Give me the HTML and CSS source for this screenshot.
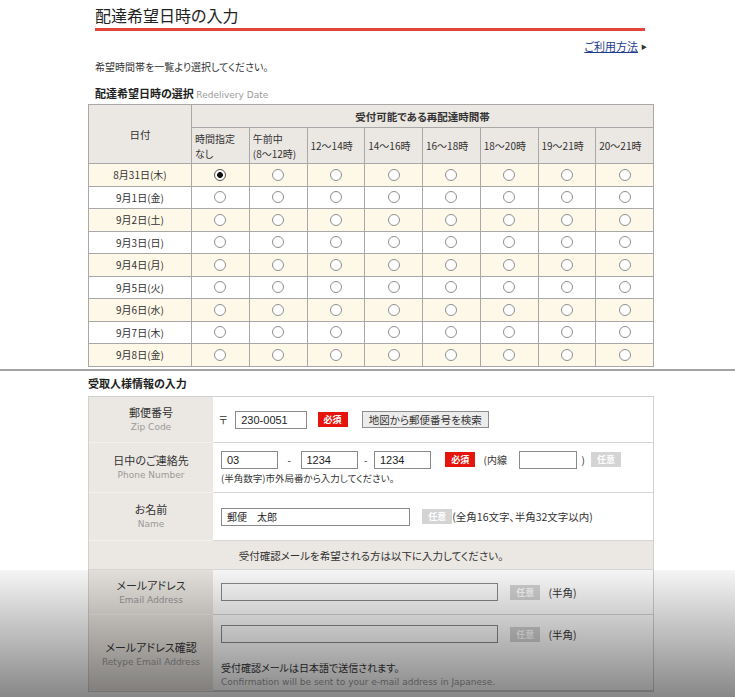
FILE: index.html
```html
<!DOCTYPE html>
<html lang="ja">

<head>
  <meta charset="UTF-8" />
  <meta name="viewport" content="width=device-width, initial-scale=1.0" />
  <title>配達希望日時の入力</title>
  <link rel="stylesheet" href="styles.css">
</head>

<body>
  <!-- 配達希望日時 -->
  <div class="panel panel-top">
    <div class="wrap">
      <h1 class="page-title">配達希望日時の入力</h1>
      <div class="guide"><a href="#">ご利用方法</a><span class="tri">▶</span></div>
      <p class="lead">希望時間帯を一覧より選択してください。</p>
      <h2 class="sub-title">配達希望日時の選択 <span class="en">Redelivery Date</span></h2>

      <table class="date-table">
        <colgroup>
          <col class="col-date">
          <col span="8">
        </colgroup>
        <thead>
          <tr class="head-main">
            <th rowspan="2" class="th-date">日付</th>
            <th colspan="8" class="th-span">受付可能である再配達時間帯</th>
          </tr>
          <tr class="head-sub">
            <th>時間指定<br>なし</th>
            <th>午前中<br>(8〜12時)</th>
            <th>12〜14時</th>
            <th>14〜16時</th>
            <th>16〜18時</th>
            <th>18〜20時</th>
            <th>19〜21時</th>
            <th>20〜21時</th>
          </tr>
        </thead>
        <tbody>
          <tr>
            <td>8月31日(木)</td>
            <td><input class="slot" type="radio" name="slot" value="0831-0" checked></td>
            <td><input class="slot" type="radio" name="slot" value="0831-1"></td>
            <td><input class="slot" type="radio" name="slot" value="0831-2"></td>
            <td><input class="slot" type="radio" name="slot" value="0831-3"></td>
            <td><input class="slot" type="radio" name="slot" value="0831-4"></td>
            <td><input class="slot" type="radio" name="slot" value="0831-5"></td>
            <td><input class="slot" type="radio" name="slot" value="0831-6"></td>
            <td><input class="slot" type="radio" name="slot" value="0831-7"></td>
          </tr>
          <tr>
            <td>9月1日(金)</td>
            <td><input class="slot" type="radio" name="slot" value="0901-0"></td>
            <td><input class="slot" type="radio" name="slot" value="0901-1"></td>
            <td><input class="slot" type="radio" name="slot" value="0901-2"></td>
            <td><input class="slot" type="radio" name="slot" value="0901-3"></td>
            <td><input class="slot" type="radio" name="slot" value="0901-4"></td>
            <td><input class="slot" type="radio" name="slot" value="0901-5"></td>
            <td><input class="slot" type="radio" name="slot" value="0901-6"></td>
            <td><input class="slot" type="radio" name="slot" value="0901-7"></td>
          </tr>
          <tr>
            <td>9月2日(土)</td>
            <td><input class="slot" type="radio" name="slot" value="0902-0"></td>
            <td><input class="slot" type="radio" name="slot" value="0902-1"></td>
            <td><input class="slot" type="radio" name="slot" value="0902-2"></td>
            <td><input class="slot" type="radio" name="slot" value="0902-3"></td>
            <td><input class="slot" type="radio" name="slot" value="0902-4"></td>
            <td><input class="slot" type="radio" name="slot" value="0902-5"></td>
            <td><input class="slot" type="radio" name="slot" value="0902-6"></td>
            <td><input class="slot" type="radio" name="slot" value="0902-7"></td>
          </tr>
          <tr>
            <td>9月3日(日)</td>
            <td><input class="slot" type="radio" name="slot" value="0903-0"></td>
            <td><input class="slot" type="radio" name="slot" value="0903-1"></td>
            <td><input class="slot" type="radio" name="slot" value="0903-2"></td>
            <td><input class="slot" type="radio" name="slot" value="0903-3"></td>
            <td><input class="slot" type="radio" name="slot" value="0903-4"></td>
            <td><input class="slot" type="radio" name="slot" value="0903-5"></td>
            <td><input class="slot" type="radio" name="slot" value="0903-6"></td>
            <td><input class="slot" type="radio" name="slot" value="0903-7"></td>
          </tr>
          <tr>
            <td>9月4日(月)</td>
            <td><input class="slot" type="radio" name="slot" value="0904-0"></td>
            <td><input class="slot" type="radio" name="slot" value="0904-1"></td>
            <td><input class="slot" type="radio" name="slot" value="0904-2"></td>
            <td><input class="slot" type="radio" name="slot" value="0904-3"></td>
            <td><input class="slot" type="radio" name="slot" value="0904-4"></td>
            <td><input class="slot" type="radio" name="slot" value="0904-5"></td>
            <td><input class="slot" type="radio" name="slot" value="0904-6"></td>
            <td><input class="slot" type="radio" name="slot" value="0904-7"></td>
          </tr>
          <tr>
            <td>9月5日(火)</td>
            <td><input class="slot" type="radio" name="slot" value="0905-0"></td>
            <td><input class="slot" type="radio" name="slot" value="0905-1"></td>
            <td><input class="slot" type="radio" name="slot" value="0905-2"></td>
            <td><input class="slot" type="radio" name="slot" value="0905-3"></td>
            <td><input class="slot" type="radio" name="slot" value="0905-4"></td>
            <td><input class="slot" type="radio" name="slot" value="0905-5"></td>
            <td><input class="slot" type="radio" name="slot" value="0905-6"></td>
            <td><input class="slot" type="radio" name="slot" value="0905-7"></td>
          </tr>
          <tr>
            <td>9月6日(水)</td>
            <td><input class="slot" type="radio" name="slot" value="0906-0"></td>
            <td><input class="slot" type="radio" name="slot" value="0906-1"></td>
            <td><input class="slot" type="radio" name="slot" value="0906-2"></td>
            <td><input class="slot" type="radio" name="slot" value="0906-3"></td>
            <td><input class="slot" type="radio" name="slot" value="0906-4"></td>
            <td><input class="slot" type="radio" name="slot" value="0906-5"></td>
            <td><input class="slot" type="radio" name="slot" value="0906-6"></td>
            <td><input class="slot" type="radio" name="slot" value="0906-7"></td>
          </tr>
          <tr>
            <td>9月7日(木)</td>
            <td><input class="slot" type="radio" name="slot" value="0907-0"></td>
            <td><input class="slot" type="radio" name="slot" value="0907-1"></td>
            <td><input class="slot" type="radio" name="slot" value="0907-2"></td>
            <td><input class="slot" type="radio" name="slot" value="0907-3"></td>
            <td><input class="slot" type="radio" name="slot" value="0907-4"></td>
            <td><input class="slot" type="radio" name="slot" value="0907-5"></td>
            <td><input class="slot" type="radio" name="slot" value="0907-6"></td>
            <td><input class="slot" type="radio" name="slot" value="0907-7"></td>
          </tr>
          <tr>
            <td>9月8日(金)</td>
            <td><input class="slot" type="radio" name="slot" value="0908-0"></td>
            <td><input class="slot" type="radio" name="slot" value="0908-1"></td>
            <td><input class="slot" type="radio" name="slot" value="0908-2"></td>
            <td><input class="slot" type="radio" name="slot" value="0908-3"></td>
            <td><input class="slot" type="radio" name="slot" value="0908-4"></td>
            <td><input class="slot" type="radio" name="slot" value="0908-5"></td>
            <td><input class="slot" type="radio" name="slot" value="0908-6"></td>
            <td><input class="slot" type="radio" name="slot" value="0908-7"></td>
          </tr>
        </tbody>
      </table>
    </div>
  </div>

  <!-- 受取人様情報 -->
  <div class="panel panel-bottom">
    <div class="wrap">
      <h2 class="sub-title sub-title-flush">受取人様情報の入力</h2>

      <table class="form-table">
        <tr class="row-zip">
          <th>
            <span class="label-ja">郵便番号</span>
            <span class="label-en">Zip Code</span>
          </th>
          <td>
            <span class="zip-mark">〒</span>
            <input class="field field-zip" type="text" value="230-0051">
            <span class="badge badge-req">必須</span>
            <button class="btn-search" type="button">地図から郵便番号を検索</button>
          </td>
        </tr>
        <tr class="row-tel">
          <th>
            <span class="label-ja">日中のご連絡先</span>
            <span class="label-en">Phone Number</span>
          </th>
          <td>
            <div class="tel-line">
              <input class="field field-tel" type="text" value="03">
              <span class="dash dash-wide">-</span>
              <input class="field field-tel" type="text" value="1234">
              <span class="dash">-</span>
              <input class="field field-tel" type="text" value="1234">
              <span class="badge badge-req badge-gap">必須</span>
              <span class="ext">(内線</span>
              <input class="field field-ext" type="text">
              <span class="ext-close">)</span>
              <span class="badge badge-opt">任意</span>
            </div>
            <p class="note">(半角数字)市外局番から入力してください。</p>
          </td>
        </tr>
        <tr class="row-name">
          <th>
            <span class="label-ja">お名前</span>
            <span class="label-en">Name</span>
          </th>
          <td>
            <input class="field field-name" type="text" value="郵便　太郎">
            <span class="badge badge-opt badge-gap-s">任意</span><span class="hint">(全角16文字、半角32文字以内)</span>
          </td>
        </tr>
        <tr class="row-msg">
          <td colspan="2">受付確認メールを希望される方は以下に入力してください。</td>
        </tr>
        <tr class="row-mail">
          <th>
            <span class="label-ja">メールアドレス</span>
            <span class="label-en">Email Address</span>
          </th>
          <td>
            <input class="field field-mail" type="text">
            <span class="badge badge-opt badge-gap-s">任意</span>
            <span class="hint hint-mail">(半角)</span>
          </td>
        </tr>
        <tr class="row-retype">
          <th>
            <span class="label-ja">メールアドレス確認</span>
            <span class="label-en">Retype Email Address</span>
          </th>
          <td>
            <input class="field field-mail" type="text">
            <span class="badge badge-opt badge-gap-s">任意</span>
            <span class="hint hint-mail">(半角)</span>
            <p class="mail-note">受付確認メールは日本語で送信されます。</p>
            <p class="mail-note-en">Confirmation will be sent to your e-mail address in Japanese.</p>
          </td>
        </tr>
      </table>
    </div>
  </div>

  <div class="fade"></div>
</body>

</html>
```

FILE: styles.css
```css
html,
body {
  margin: 0;
  padding: 0;
  height: 697px;
  overflow: hidden;
  background: #fff;
}

body {
  position: relative;
  font-family: "Noto Sans CJK JP", sans-serif;
  font-feature-settings: "palt";
  font-size: 10px;
  color: #333;
}

.panel-top {
  height: 369px;
  box-sizing: border-box;
  padding-top: 5px;
}

.panel-bottom {
  border-top: 2px solid #a2a2a2;
}

.wrap {
  width: 566px;
  margin-left: 88px;
}

/* heading block */
.page-title {
  margin: 0 9px 0 7px;
  padding-bottom: 3px;
  font-size: 16px;
  line-height: 20px;
  font-weight: normal;
  color: #222;
  border-bottom: 3px solid #e2453a;
}

.guide {
  margin: 8px 7px 0 0;
  text-align: right;
  font-size: 11px;
  line-height: 14px;
}

.guide a {
  color: #1d3c8c;
  text-decoration: underline;
}

.guide .tri {
  display: inline-block;
  margin-left: 3px;
  font-size: 6px;
  color: #333;
  vertical-align: 2px;
}

.lead {
  margin: 6px 0 0 7px;
  font-size: 10px;
  line-height: 14px;
}

.sub-title {
  margin: 12px 0 4px 7px;
  font-size: 11px;
  line-height: 14px;
  font-weight: bold;
  color: #222;
}

.sub-title .en {
  font-family: "DejaVu Sans", sans-serif;
  font-size: 9px;
  line-height: 10px;
  font-weight: normal;
  color: #9a9a9a;
}

.sub-title-flush {
  margin: 5px 0 6px 0;
}

/* date / time slot table */
.date-table {
  width: 566px;
  border-collapse: collapse;
  table-layout: fixed;
}

.date-table th,
.date-table td {
  border: 1px solid #a8a8a8;
  padding: 0;
}

.date-table .col-date {
  width: 103px;
}

.date-table thead th {
  background: #ebe7e2;
  font-weight: normal;
}

.head-main {
  height: 23px;
}

.th-date {
  font-size: 10.5px;
}

.th-span {
  font-weight: bold !important;
  font-size: 10.5px;
}

.head-sub {
  height: 36px;
}

.head-sub th {
  text-align: left;
  padding-left: 3px !important;
  line-height: 15px;
  font-size: 10px;
}

.date-table tbody tr {
  height: 22.5px;
}

.date-table tbody td {
  text-align: center;
  font-size: 10px;
  background: #fff;
}

.date-table tbody tr:nth-child(odd) td {
  background: #fdf8e7;
}

.slot {
  appearance: none;
  display: block;
  width: 12px;
  height: 12px;
  margin: 0 auto;
  border: 1px solid #8f8f8f;
  border-radius: 50%;
  background: #fff;
}

.slot:checked {
  border-color: #555;
  background: radial-gradient(circle, #111 0 2.6px, #fff 3.2px);
}

/* recipient form */
.form-table {
  width: 566px;
  border: 1px solid #d0d0d0;
  border-spacing: 0;
}

.form-table th {
  width: 124px;
  padding: 0;
  background: #ebe7e2;
  font-weight: normal;
  text-align: center;
  border-bottom: 1px solid #f3f1ee;
}

.form-table td {
  padding: 0 8px;
  border-bottom: 1px solid #d6d6d6;
  background: #fff;
  font-size: 10px;
}

.label-ja {
  display: block;
  font-size: 11px;
  line-height: 15px;
  color: #333;
}

.label-en {
  display: block;
  font-family: "DejaVu Sans", sans-serif;
  font-size: 9px;
  line-height: 14px;
  color: #9a9a9a;
}

.row-zip {
  height: 46px;
}

.row-tel {
  height: 50px;
}

.row-name {
  height: 48px;
}

.row-msg td {
  height: 28px;
  padding: 0;
  background: #ebe7e2;
  text-align: center;
  font-size: 10.5px;
}

.row-mail {
  height: 45px;
}

.row-retype th,
.row-retype td {
  vertical-align: top;
}

.row-retype th {
  padding-top: 25px;
}

.row-retype td {
  padding-top: 10px;
}

.field {
  box-sizing: border-box;
  height: 18px;
  margin: 0;
  padding: 0 5px;
  border: 1px solid #8a8a8a;
  background: #fff;
  font-family: "Liberation Sans", "Noto Sans CJK JP", sans-serif;
  font-size: 11px;
  color: #222;
  vertical-align: middle;
}

.zip-mark {
  display: inline-block;
  width: 14px;
  margin-left: -2px;
  font-size: 10px;
  vertical-align: middle;
}

.field-zip {
  width: 72px;
}

.field-tel {
  width: 57px;
}

.field-ext {
  width: 58px;
}

.field-name {
  width: 189px;
  font-family: "Noto Sans CJK JP", sans-serif;
  font-size: 10px;
}

.field-mail {
  width: 277px;
}

.badge {
  display: inline-block;
  padding: 0 6px;
  font-size: 9px;
  line-height: 15px;
  font-weight: bold;
  color: #fff;
  vertical-align: middle;
}

.badge-req {
  background: #e5150e;
  margin-left: 8px;
}

.badge-opt {
  background: #d4d4d4;
}

.badge-gap {
  margin-left: 12px;
}

.badge-gap-s {
  margin-left: 10px;
}

.btn-search {
  box-sizing: border-box;
  width: 127px;
  height: 17px;
  margin-left: 12px;
  padding: 0;
  border: 1px solid #8e8e8e;
  background: #ececec;
  font-family: "Noto Sans CJK JP", sans-serif;
  font-feature-settings: "palt";
  font-size: 10.5px;
  color: #333;
  vertical-align: middle;
}

.tel-line {
  white-space: nowrap;
}

.dash {
  display: inline-block;
  width: 12px;
  text-align: center;
  vertical-align: middle;
}

.dash-wide {
  width: 18px;
}

.ext {
  margin: 0 10px 0 6px;
  vertical-align: middle;
}

.ext-close {
  margin: 0 4px 0 2px;
  vertical-align: middle;
}

.note {
  margin: 3px 0 0;
  font-size: 9.5px;
  line-height: 13px;
}

.hint {
  font-size: 10.5px;
  vertical-align: middle;
}

.hint-mail {
  margin-left: 6px;
}

.mail-note {
  margin: 17px 0 0;
  font-size: 10px;
  line-height: 15px;
}

.mail-note-en {
  margin: 0;
  font-family: "DejaVu Sans", sans-serif;
  font-size: 9px;
  line-height: 15px;
  color: #9a9a9a;
}

/* darkening along the lower edge, drawn over the form */
.fade {
  position: absolute;
  left: 0;
  right: 0;
  top: 570px;
  bottom: 0;
  background: linear-gradient(180deg, rgba(0, 0, 0, 0.04), rgba(0, 0, 0, 0.47));
  pointer-events: none;
}
```
